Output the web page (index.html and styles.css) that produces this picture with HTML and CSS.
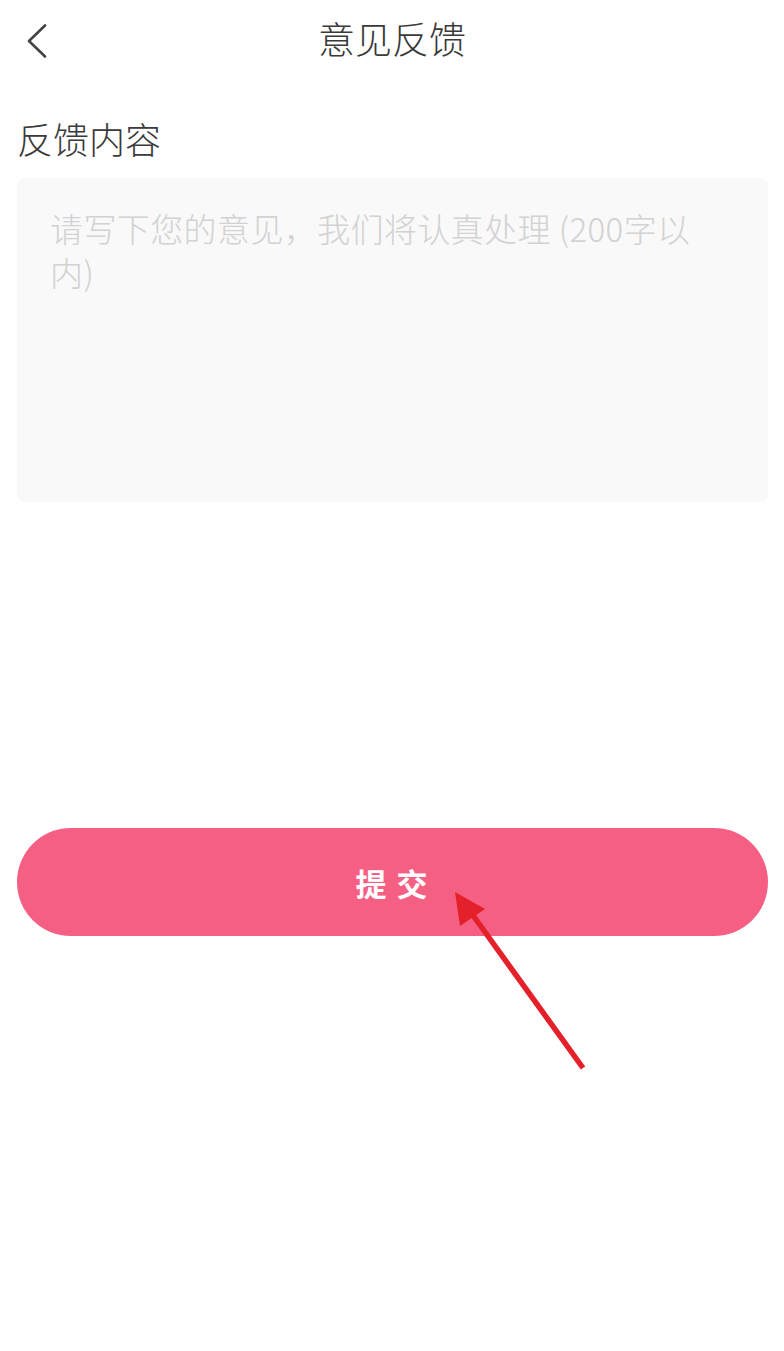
FILE: index.html
```html
<!DOCTYPE html>
<html lang="zh-CN">
<head>
<meta charset="utf-8">
<title>意见反馈</title>
<link rel="stylesheet" href="styles.css">
</head>
<body>
<div class="page">
  <header class="nav">
    <span class="back">
      <svg width="22" height="34" viewBox="0 0 22 34"><path d="M19 1.5 L3 17 L19 32.5" fill="none" stroke="#444" stroke-width="2.6" stroke-linecap="round" stroke-linejoin="round"/></svg>
    </span>
    <h1 class="title">意见反馈</h1>
  </header>
  <main class="content">
    <h2 class="label">反馈内容</h2>
    <div class="field">
      <p class="placeholder">请写下您的意见，我们将认真处理 (200字以内)</p>
    </div>
    <button class="submit">提交</button>
  </main>
  <svg class="arrow" width="784" height="1351" viewBox="0 0 784 1351">
    <line x1="583" y1="1068" x2="472" y2="914" stroke="#e4202a" stroke-width="5.5"/>
    <polygon points="455,892 460,926 485,909" fill="#e4202a"/>
  </svg>
</div>
</body>
</html>
```
FILE: styles.css
```css
* { box-sizing: border-box; }
html, body { margin: 0; padding: 0; background: #fff; }
body {
  font-family: "Noto Sans CJK SC", "Noto Sans", sans-serif;
  color: #333;
}
.page {
  position: relative;
  width: 784px;
  height: 1351px;
  overflow: hidden;
}
.nav {
  position: relative;
  height: 80px;
  display: flex;
  align-items: center;
  justify-content: center;
  padding-bottom: 4px;
}
.back {
  position: absolute;
  left: 26px;
  top: 24px;
  display: flex;
}
.title {
  margin: 0;
  font-size: 37px;
  font-weight: 300;
  color: #3a3a3a;
  line-height: 1;
}
.content {
  padding: 0 16px 0 17px;
}
.label {
  margin: 38px 0 20px 0;
  font-size: 36px;
  font-weight: 300;
  color: #3a3a3a;
  line-height: 40px;
}
.field {
  height: 324px;
  background: #f9f9f9;
  border-radius: 8px;
  padding: 28px 60px 0 33px;
}
.placeholder {
  margin: 0;
  font-size: 33px;
  font-weight: 300;
  line-height: 44px;
  letter-spacing: 0.4px;
  color: #d2d2d2;
}
.submit {
  display: block;
  width: 100%;
  height: 108px;
  margin-top: 326px;
  border: none;
  border-radius: 54px;
  background: #f65f84;
  color: #fff;
  font-family: "Noto Sans CJK SC", "Noto Sans", sans-serif;
  font-size: 31px;
  font-weight: 700;
  letter-spacing: 10px;
  padding-left: 14px;
}
.arrow {
  position: absolute;
  left: 0;
  top: 0;
  pointer-events: none;
}
```
